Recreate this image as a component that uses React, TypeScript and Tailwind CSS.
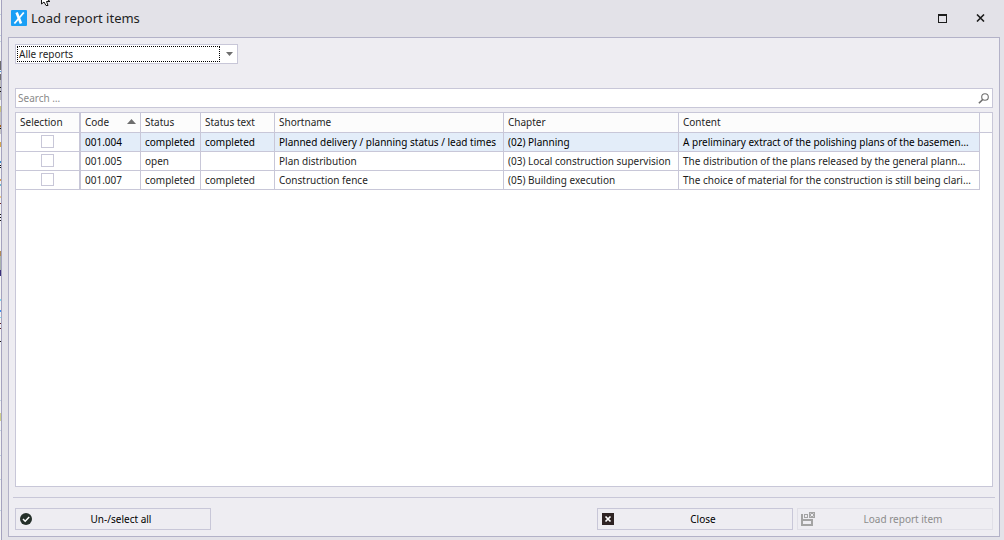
import React from 'react';

interface ReportItem {
  code: string;
  status: string;
  statusText: string;
  shortname: string;
  chapter: string;
  content: string;
}

const items: ReportItem[] = [
  {
    code: '001.004',
    status: 'completed',
    statusText: 'completed',
    shortname: 'Planned delivery / planning status / lead times',
    chapter: '(02) Planning',
    content: 'A preliminary extract of the polishing plans of the basemen…',
  },
  {
    code: '001.005',
    status: 'open',
    statusText: '',
    shortname: 'Plan distribution',
    chapter: '(03) Local construction supervision',
    content: 'The distribution of the plans released by the general plann…',
  },
  {
    code: '001.007',
    status: 'completed',
    statusText: 'completed',
    shortname: 'Construction fence',
    chapter: '(05) Building execution',
    content: 'The choice of material for the construction is still being clari…',
  },
];

// y, height, colour of the window edge that shows behind the dialog
const backdrop: [number, number, string][] = [
  [14, 1, '#c3d3e0'],
  [35, 1, '#c3d3e0'],
  [41, 1, '#c3d3e0'],
  [61, 9, '#6b6b6b'],
  [71, 1, '#4f9bd8'],
  [74, 6, '#6f6f70'],
  [80, 20, '#bdbdbd'],
  [87, 1, '#111111'],
  [91, 1, '#111111'],
  [106, 6, '#c9c07a'],
  [112, 22, '#c4c4c4'],
  [125, 2, '#a8641c'],
  [128, 1, '#111111'],
  [142, 5, '#d3a650'],
  [161, 2, '#3a8fd0'],
  [165, 1, '#111111'],
  [167, 1, '#111111'],
  [179, 2, '#d99a4a'],
  [184, 2, '#6fb7c9'],
  [196, 2, '#f0c98a'],
  [203, 1, '#6b1f1f'],
  [214, 1, '#111111'],
  [217, 1, '#111111'],
  [220, 1, '#111111'],
  [251, 5, '#b08a55'],
  [256, 14, '#a9b3ad'],
  [270, 6, '#3a2f7a'],
  [299, 2, '#7fd8f5'],
  [310, 2, '#3f8ff0'],
  [317, 1, '#7fd8f5'],
  [323, 1, '#5a1f2a'],
  [328, 1, '#5a1f2a'],
  [341, 1, '#111111'],
  [400, 1, '#c3d3e0'],
  [413, 8, '#cfcf8a'],
  [430, 1, '#c3d3e0'],
  [455, 1, '#c3d3e0'],
  [479, 1, '#c3d3e0'],
  [510, 1, '#c3d3e0'],
];

const th = 'h-5 truncate border-r border-b border-[#c8c7d8] bg-[#fcfcfc] pb-[2px] pl-1 text-left font-normal';
const td = 'h-[19px] truncate border-r border-b border-[#c8c7d8] pl-1';
const btn = 'relative flex h-[22px] w-[196px] items-center justify-center border pl-4';

const Titlebar: React.FC = () => (
  <header className="flex h-[37px] items-center pb-px pl-[9px]">
    <svg width="16" height="16" viewBox="0 0 16 16" className="shrink-0">
      <rect width="16" height="16" rx="1" fill="#1a9ff5" />
      <path d="M5.600 2.500 10 13.500" stroke="#fff" strokeWidth="2.600" />
      <path d="M12.800 2.500 3.400 13.500" stroke="#fff" strokeWidth="1.800" />
    </svg>
    <h1 className="ml-1 flex-1 text-[13px] text-[#1f1f1f]">Load report items</h1>
    <button type="button" aria-label="Maximize" className="mr-[29px]">
      <svg width="9" height="9" viewBox="0 0 9 9" shapeRendering="crispEdges">
        <path d="M0 0h9v9H0zM1 2v6h7V2z" fill="#1c1c1c" fillRule="evenodd" />
      </svg>
    </button>
    <button type="button" aria-label="Close window" className="mr-[19px]">
      <svg width="9" height="8" viewBox="0 0 9 8">
        <path d="M1 .5 8 7.500M8 .5 1 7.500" stroke="#1c1c1c" strokeWidth="1.600" />
      </svg>
    </button>
  </header>
);

const ItemTable: React.FC = () => (
  <div className="mx-[6px] mt-1 flex-1 border border-[#c8c7d8] bg-white">
    <table className="w-full table-fixed border-separate border-spacing-0">
      <colgroup>
        <col className="w-[65px]" />
        <col className="w-[60px]" />
        <col className="w-[60px]" />
        <col className="w-[74px]" />
        <col className="w-[229px]" />
        <col className="w-[175px]" />
        <col />
        <col className="w-3" />
      </colgroup>
      <thead>
        <tr>
          <th className="h-5 border-r-2 border-b border-[#c8c7d8] bg-[#fcfcfc] pb-[2px] pl-1 text-left font-normal">Selection</th>
          <th className={th} aria-sort="ascending">
            <div className="flex items-center justify-between pr-1">
              Code
              <svg width="9" height="5" viewBox="0 0 9 5">
                <path d="M4.500 0 9 5H0z" fill="#6e6e6e" />
              </svg>
            </div>
          </th>
          <th className={th}>Status</th>
          <th className={th}>Status text</th>
          <th className={th}>Shortname</th>
          <th className={th}>Chapter</th>
          <th className={th}>Content</th>
          <td className="border-b border-[#c8c7d8] bg-[#fcfcfc]"></td>
        </tr>
      </thead>
      <tbody>
        {items.map((item, i) => (
          <tr key={item.code} className={i === 0 ? 'text-black' : ''}>
            <td className="h-[19px] border-r-2 border-b border-[#c8c7d8] bg-white">
              <input
                type="checkbox"
                aria-label={`Select ${item.code}`}
                className="mx-auto mb-px block size-[13px] appearance-none border border-[#c8c7d8] bg-white"
              />
            </td>
            {[item.code, item.status, item.statusText, item.shortname, item.chapter, item.content].map((value, c) => (
              <td key={c} className={i === 0 ? `${td} bg-[#e3edf9]` : td}>{value}</td>
            ))}
            <td></td>
          </tr>
        ))}
      </tbody>
    </table>
  </div>
);

const App: React.FC = () => {
  return (
    <div className="relative flex h-screen overflow-hidden bg-[#e3e2e8] font-['Noto_Sans','Open_Sans',sans-serif] text-[10px] leading-4 text-[#1f1f1f]">
      <svg className="h-full w-px shrink-0 bg-[#f3f3f3]" shapeRendering="crispEdges">
        {backdrop.map(([y, h, fill]) => (
          <rect key={y} x="0" y={y} width="1" height={h} fill={fill} />
        ))}
      </svg>

      {/* Mouse pointer */}
      <svg className="absolute top-0 left-10" width="11" height="7" viewBox="0 0 11 7">
        <path d="M1.500-5v9L4 2l2 3.500h2L6.500 1.500H10z" fill="#fff" stroke="#111" />
      </svg>

      <div className="flex min-w-0 flex-1 flex-col border-l border-[#a5a3bf]">
        <Titlebar />

        <main className="mr-1 mb-[3px] ml-[6px] flex flex-1 flex-col border border-[#b3b2c8] bg-[#eeedf2]">
          {/* Report filter */}
          <div className="relative mt-[6px] ml-[6px] h-5 w-[223px] border border-[#c8c7d8] bg-white p-px">
            <select
              aria-label="Reports"
              className="block h-4 w-[203px] appearance-none border border-dotted border-black pl-px leading-[14px] outline-none"
            >
              <option>Alle reports</option>
            </select>
            <svg className="pointer-events-none absolute top-[7px] right-1" width="7" height="4" viewBox="0 0 7 4">
              <path d="M0 0h7L3.500 4z" fill="#6e6e6e" />
            </svg>
          </div>

          {/* Search */}
          <div className="mx-[6px] mt-6 flex h-5 items-center border border-[#c8c7d8] bg-white pr-[3px]">
            <input
              type="text"
              aria-label="Search"
              placeholder="Search …"
              className="min-w-0 flex-1 pl-[2px] outline-none placeholder:text-[#8a8a8a]"
            />
            <svg width="11" height="11" viewBox="0 0 11 11" fill="none" stroke="#6e6e6e">
              <circle cx="7" cy="4" r="3.300" strokeWidth="1.100" />
              <path d="M4.700 6.500.9 10.300" strokeWidth="1.600" />
            </svg>
          </div>

          <ItemTable />

          <hr className="mx-1 mt-[10px] border-[#c8c7d8]" />

          <footer className="mx-[6px] mt-[10px] mb-[6px] flex gap-1">
            <button type="button" className={`${btn} mr-auto border-[#c8c7d8] text-black`}>
              <svg className="absolute left-1" width="12" height="12" viewBox="0 0 12 12">
                <circle cx="6" cy="6" r="6" fill="#25302a" />
                <path d="m3 6 2.200 2.200L9.200 4" fill="none" stroke="#fff" strokeWidth="1.500" />
              </svg>
              Un-/select all
            </button>
            <button type="button" className={`${btn} border-[#c8c7d8] text-black`}>
              <svg className="absolute left-1" width="12" height="12" viewBox="0 0 12 12">
                <path d="M0 0h12v12H0z" fill="#2e2323" />
                <path d="m3.500 3.500 5 5M8.500 3.500l-5 5" stroke="#fff" strokeWidth="1.700" />
              </svg>
              Close
            </button>
            <button type="button" disabled className={`${btn} border-[#e0dfe7] text-[#8c8c8c]`}>
              <svg className="absolute left-[3px]" width="14" height="14" viewBox="0 0 14 14" shapeRendering="crispEdges">
                <path d="M0 2h2v5h10v7H0zM2 9v3h8V9z" fill="#a3a3a3" fillRule="evenodd" />
                <path d="M3 2h4v4H3zM4 3v2h2V3z" fill="#a3a3a3" fillRule="evenodd" />
                <path d="M8 0h6v6H8z" fill="#a3a3a3" />
                <path d="m9.500 1.500 3 3M12.500 1.500l-3 3" stroke="#eeedf2" shapeRendering="auto" />
              </svg>
              Load report item
            </button>
          </footer>
        </main>
      </div>
    </div>
  );
};

export default App;
